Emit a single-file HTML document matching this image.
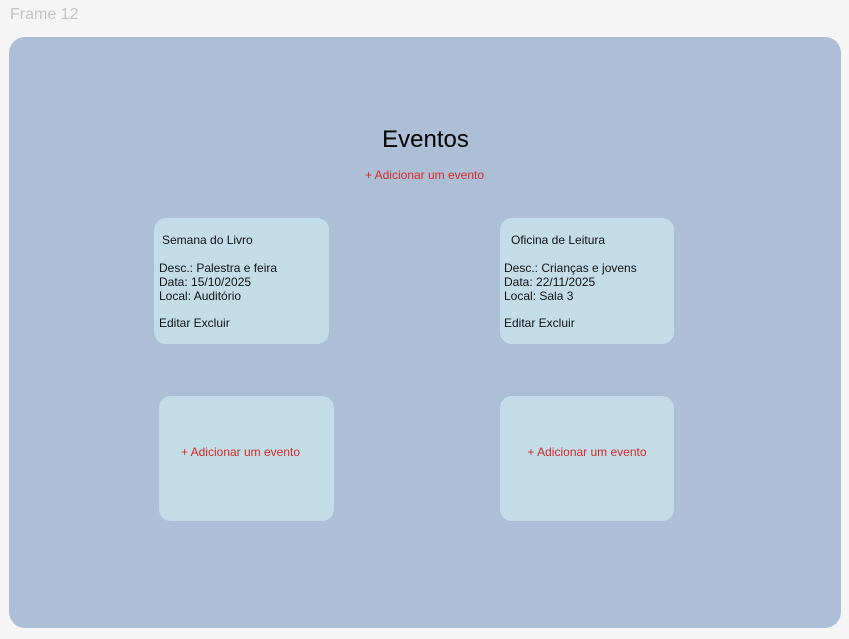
<!DOCTYPE html>
<html><head><meta charset="utf-8"><style>
body{margin:0;width:849px;height:639px;background:#f5f5f5;font-family:"Liberation Sans",sans-serif;position:relative;overflow:hidden}
.lbl{position:absolute;left:10px;top:6px;font-size:16px;color:#c4c4c4}
.frame{position:absolute;left:9px;top:37px;width:832px;height:591px;background:#adbfd6;border-radius:16px}
.t{position:absolute;left:0;width:849px;text-align:center}
.card{position:absolute;background:#c2dde8;border-radius:12px;font-size:12px;color:#111}
.card div{position:absolute;white-space:nowrap;line-height:14px}
.red{color:#d42a2a;font-size:12px}
</style></head><body>
<div class="lbl">Frame 12</div>
<div class="frame"></div>
<div class="t" style="top:126px;font-size:24px;color:#000;left:1px">Eventos</div>
<div class="t red" style="top:168px">+ Adicionar um evento</div>
<div class="card" style="left:154px;top:218px;width:175px;height:126px">
<div style="left:8px;top:15px">Semana do Livro</div>
<div style="left:5px;top:43px">Desc.: Palestra e feira<br>Data: 15/10/2025<br>Local: Auditório</div>
<div style="left:5px;top:98px">Editar Excluir</div></div>
<div class="card" style="left:500px;top:218px;width:174px;height:126px">
<div style="left:11px;top:15px">Oficina de Leitura</div>
<div style="left:4px;top:43px">Desc.: Crianças e jovens<br>Data: 22/11/2025<br>Local: Sala 3</div>
<div style="left:4px;top:98px">Editar Excluir</div></div>
<div class="card" style="left:159px;top:396px;width:175px;height:125px">
<div class="red" style="left:-6px;width:175px;text-align:center;top:49px">+ Adicionar um evento</div></div>
<div class="card" style="left:500px;top:396px;width:174px;height:125px">
<div class="red" style="left:0;width:174px;text-align:center;top:49px">+ Adicionar um evento</div></div>
</body></html>
